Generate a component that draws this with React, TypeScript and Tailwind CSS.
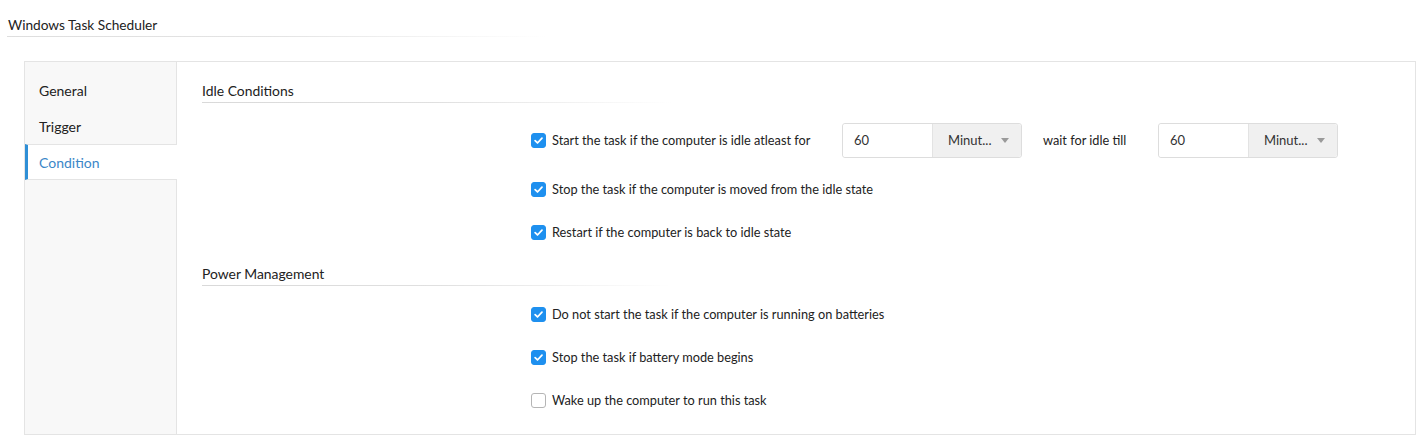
import { useState } from "react";

const tabs = ["General", "Trigger", "Condition"];

function Check({ checked, onChange }: { checked: boolean; onChange: () => void }) {
  return (
    <button
      type="button"
      onClick={onChange}
      className={
        "flex h-[15px] w-[15px] shrink-0 items-center justify-center rounded-[3px] border " +
        (checked ? "border-[#1e90ef] bg-[#1e90ef]" : "border-[#b5b5b5] bg-white")
      }
    >
      {checked && (
        <svg width="11" height="11" viewBox="0 0 12 12" fill="none">
          <path d="M2.3 6.2 4.9 8.7 9.8 3.4" stroke="#fff" strokeWidth="1.9" strokeLinecap="round" strokeLinejoin="round" />
        </svg>
      )}
    </button>
  );
}

function Heading({ title }: { title: string }) {
  return (
    <div className="relative h-[22px] text-[13.9px] leading-[20px] text-[#222]">
      {title}
      <div className="absolute bottom-0 left-0 h-px w-[470px] bg-gradient-to-r from-[#d9d9d9] via-[#e0e0e0] to-transparent" />
    </div>
  );
}

function TimeField({ value }: { value: string }) {
  return (
    <div className="flex h-[35px] rounded-[3px] border border-[#dddddd] text-[13px] text-[#333]">
      <div className="flex w-[89px] items-center bg-white pl-[11px] rounded-l-[3px]">{value}</div>
      <div className="flex w-[89px] items-center justify-between border-l border-[#e3e3e3] bg-[#f0f0f0] pl-[15px] pr-[12px] rounded-r-[3px]">
        <span>Minut...</span>
        <svg width="8" height="5" viewBox="0 0 8 5">
          <path d="M0 0h8L4 5z" fill="#9a9a9a" />
        </svg>
      </div>
    </div>
  );
}

export default function App() {
  const [active, setActive] = useState("Condition");
  const [opts, setOpts] = useState<Record<string, boolean>>({
    idleStart: true,
    idleStop: true,
    idleRestart: true,
    noBattery: true,
    batteryStop: true,
    wake: false,
  });
  const toggle = (k: string) => setOpts((o) => ({ ...o, [k]: !o[k] }));

  const row = (k: string, label: string) => (
    <div className="flex h-[43px] items-center gap-[6px] pl-[329px]">
      <Check checked={opts[k]} onChange={() => toggle(k)} />
      <span className="text-[12.75px] text-[#222]">{label}</span>
    </div>
  );

  return (
    <div className="min-h-screen bg-white font-['Lato','Liberation_Sans',sans-serif] text-[#222]">
      {/* title */}
      <div className="px-[8px] pt-[15px]">
        <div className="text-[13.7px] leading-[20px]">Windows Task Scheduler</div>
        <div className="mt-[1px] h-px w-[540px] -ml-px bg-gradient-to-r from-[#dedede] via-[#e4e4e4] to-transparent" />
      </div>

      {/* panel */}
      <div className="ml-[24px] mr-[8px] mt-[24px] flex h-[374px] border border-[#e4e4e4]">
        <div className="w-[152px] shrink-0 border-r border-[#e4e4e4] bg-[#f8f8f8] pt-[10px]">
          {tabs.map((t) => {
            const on = t === active;
            return (
              <div
                key={t}
                onClick={() => setActive(t)}
                className={
                  "flex h-[36px] cursor-pointer items-center text-[14px] " +
                  (on
                    ? "-mr-px border-y border-l-[3px] border-[#e4e4e4] border-l-[#2f8fd6] bg-white pl-[11px] text-[#3b87c8]"
                    : "pl-[14px] text-[#222]")
                }
              >
                {t}
              </div>
            );
          })}
        </div>

        <div className="flex-1 pl-[25px] pt-[19px]">
          <Heading title="Idle Conditions" />

          <div className="mt-[20px] flex h-[35px] items-center pl-[329px]">
            <div className="flex w-[311px] items-center gap-[6px]">
              <Check checked={opts.idleStart} onChange={() => toggle("idleStart")} />
              <span className="text-[12.75px]">Start the task if the computer is idle atleast for</span>
            </div>
            <TimeField value="60" />
            <span className="ml-[21px] w-[115px] text-[12.75px]">wait for idle till</span>
            <TimeField value="60" />
          </div>

          <div className="mt-[10px]">
            {row("idleStop", "Stop the task if the computer is moved from the idle state")}
            {row("idleRestart", "Restart if the computer is back to idle state")}
          </div>

          <div className="mt-[10px]">
            <Heading title="Power Management" />
          </div>

          <div className="mt-[7px]">
            {row("noBattery", "Do not start the task if the computer is running on batteries")}
            {row("batteryStop", "Stop the task if battery mode begins")}
            {row("wake", "Wake up the computer to run this task")}
          </div>
        </div>
      </div>
    </div>
  );
}
